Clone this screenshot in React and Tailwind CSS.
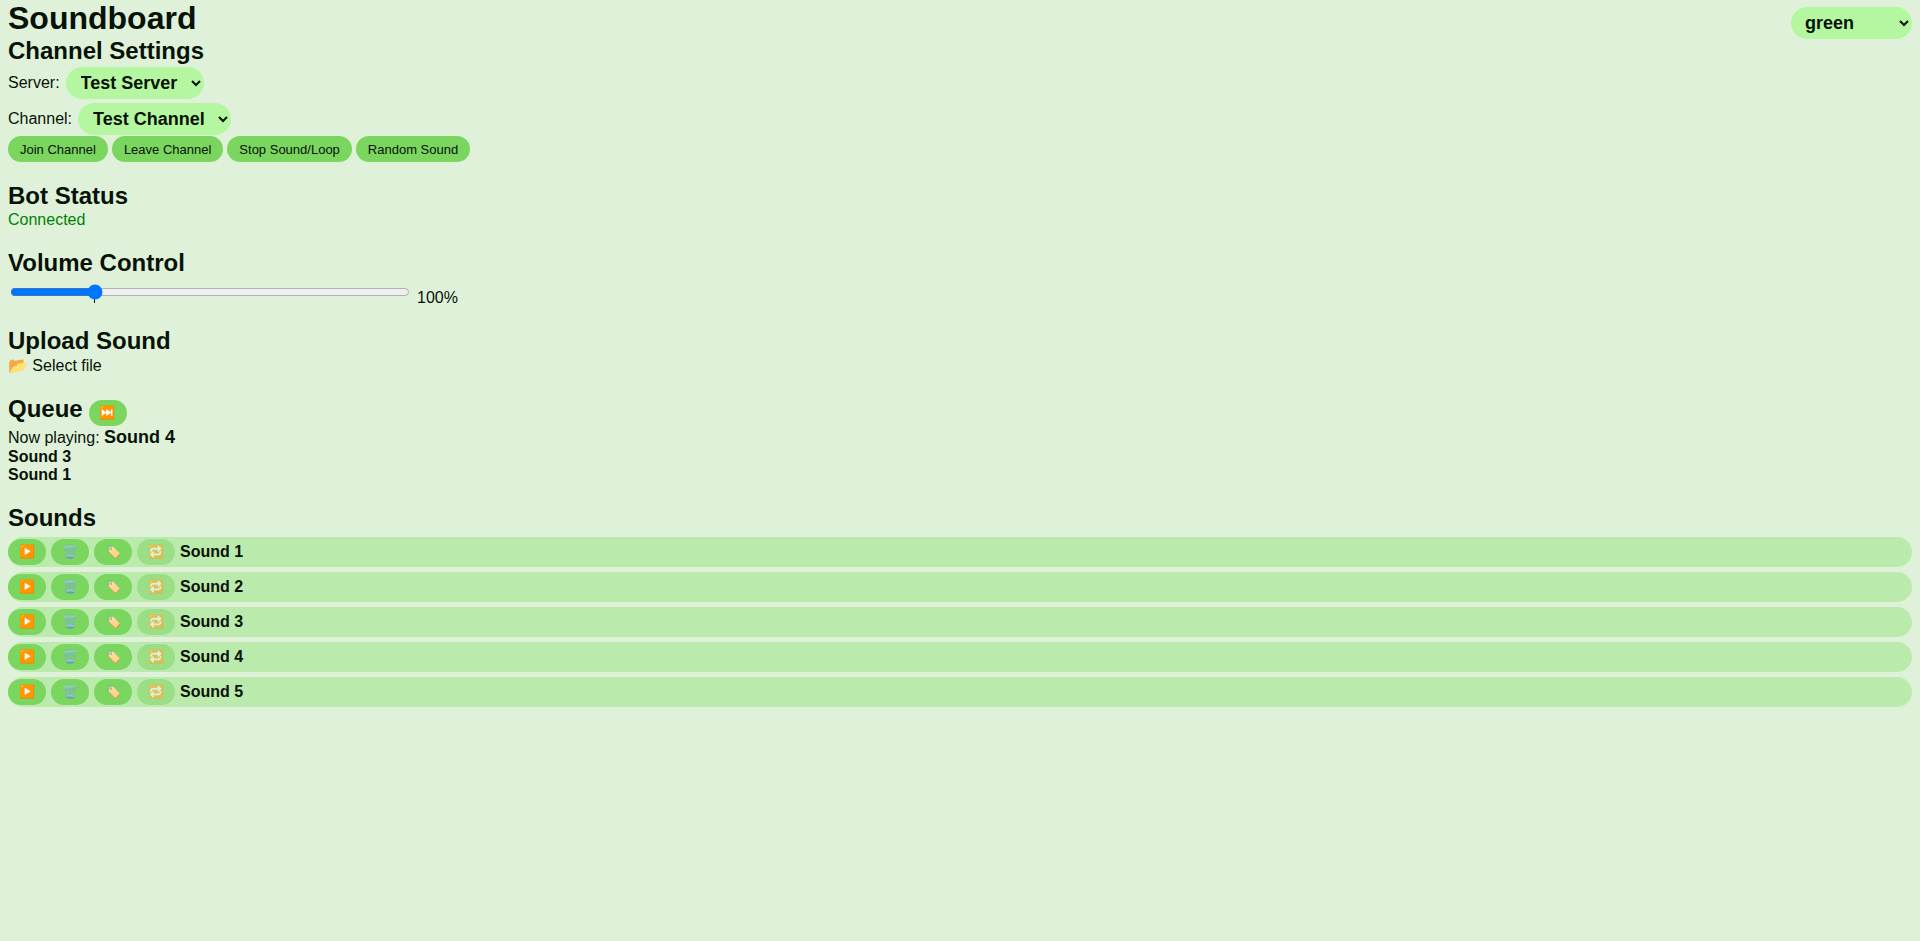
import { useState } from "react";

const SOUNDS = ["Sound 1", "Sound 2", "Sound 3", "Sound 4", "Sound 5"];
const QUEUE = ["Sound 3", "Sound 1"];

function Heading({ children }) {
  return <h2 className="text-2xl leading-7 font-bold">{children}</h2>;
}

function Picker({ options, className = "", ...props }) {
  return (
    <select
      className={`h-8 rounded-full bg-[#b5f7a1] text-lg leading-8 font-bold ${className}`}
      {...props}
    >
      {options.map((option) => (
        <option key={option}>{option}</option>
      ))}
    </select>
  );
}

function PillButton({ children }) {
  return (
    <button
      type="button"
      className="h-[26px] rounded-full bg-[#7ad65e] px-3 pt-px text-[13px] leading-4"
    >
      {children}
    </button>
  );
}

function IconButton({ label, icon, disabled }) {
  return (
    <button
      type="button"
      aria-label={label}
      disabled={disabled}
      className="h-[26px] w-[38px] shrink-0 rounded-full bg-[#7ad65e] text-[13px] leading-4 disabled:opacity-50"
    >
      {icon}
    </button>
  );
}

export default function App() {
  const [volume, setVolume] = useState(100);

  return (
    <div className="min-h-screen bg-[#dff2d9] px-2 font-['Liberation_Sans',Arial,'Noto_Color_Emoji',sans-serif] text-base leading-[18px] text-[#081208]">
      <header className="flex h-[37px] items-start justify-between">
        <h1 className="text-[32px] leading-9 font-bold">Soundboard</h1>
        <div className="pt-[7px]">
          <Picker aria-label="Theme" options={["green"]} className="w-[121px] pl-[10px]" />
        </div>
      </header>

      <main className="flex flex-col gap-5">
        <section>
          <Heading>Channel Settings</Heading>
          <div className="flex flex-col gap-1 pt-0.5">
            <div className="flex items-center gap-1.5">
              <label htmlFor="server">Server:</label>
              <Picker id="server" options={["Test Server"]} className="pr-[10px] pl-[11px]" />
            </div>
            <div className="flex items-center gap-1.5">
              <label htmlFor="channel">Channel:</label>
              <Picker id="channel" options={["Test Channel"]} className="pr-[10px] pl-[11px]" />
            </div>
          </div>
          <div className="flex flex-wrap gap-1 pt-px">
            <PillButton>Join Channel</PillButton>
            <PillButton>Leave Channel</PillButton>
            <PillButton>Stop Sound/Loop</PillButton>
            <PillButton>Random Sound</PillButton>
          </div>
        </section>

        <section>
          <Heading>Bot Status</Heading>
          <p className="pt-px text-[#008000]">Connected</p>
        </section>

        <section>
          <Heading>Volume Control</Heading>
          <div className="flex items-end gap-[5px] pt-1">
            <input
              type="range"
              aria-label="Volume"
              list="volume-marks"
              min="0"
              max="500"
              value={volume}
              onChange={(e) => setVolume(Number(e.target.value))}
              className="mx-[2px] mb-1 w-[400px]"
            />
            <datalist id="volume-marks">
              <option value="100" />
            </datalist>
            <output>{volume}%</output>
          </div>
        </section>

        <section>
          <Heading>Upload Sound</Heading>
          <div className="pt-0.5">
            <label className="cursor-pointer">
              📂 Select file
              <input type="file" className="hidden" />
            </label>
          </div>
        </section>

        <section>
          <div className="flex h-[31px] items-start gap-1.5">
            <Heading>Queue</Heading>
            <div className="self-end">
              <IconButton label="Skip" icon="⏭️" />
            </div>
          </div>
          <p className="pt-px leading-5">
            Now playing: <strong className="text-lg leading-5">Sound 4</strong>
          </p>
          <ul className="font-bold">
            {QUEUE.map((name) => (
              <li key={name}>{name}</li>
            ))}
          </ul>
        </section>

        <section>
          <Heading>Sounds</Heading>
          <ul className="flex flex-col gap-[5px] pt-[5px]">
            {SOUNDS.map((name) => (
              <li key={name} className="flex h-[30px] items-center gap-[5px] rounded-full bg-[#bbeaad]">
                <IconButton label={`Play ${name}`} icon="▶️" />
                <IconButton label={`Delete ${name}`} icon="🗑️" />
                <IconButton label={`Rename ${name}`} icon="🏷️" />
                <IconButton label={`Loop ${name}`} icon="🔁" disabled />
                <span className="font-bold">{name}</span>
              </li>
            ))}
          </ul>
        </section>
      </main>
    </div>
  );
}
